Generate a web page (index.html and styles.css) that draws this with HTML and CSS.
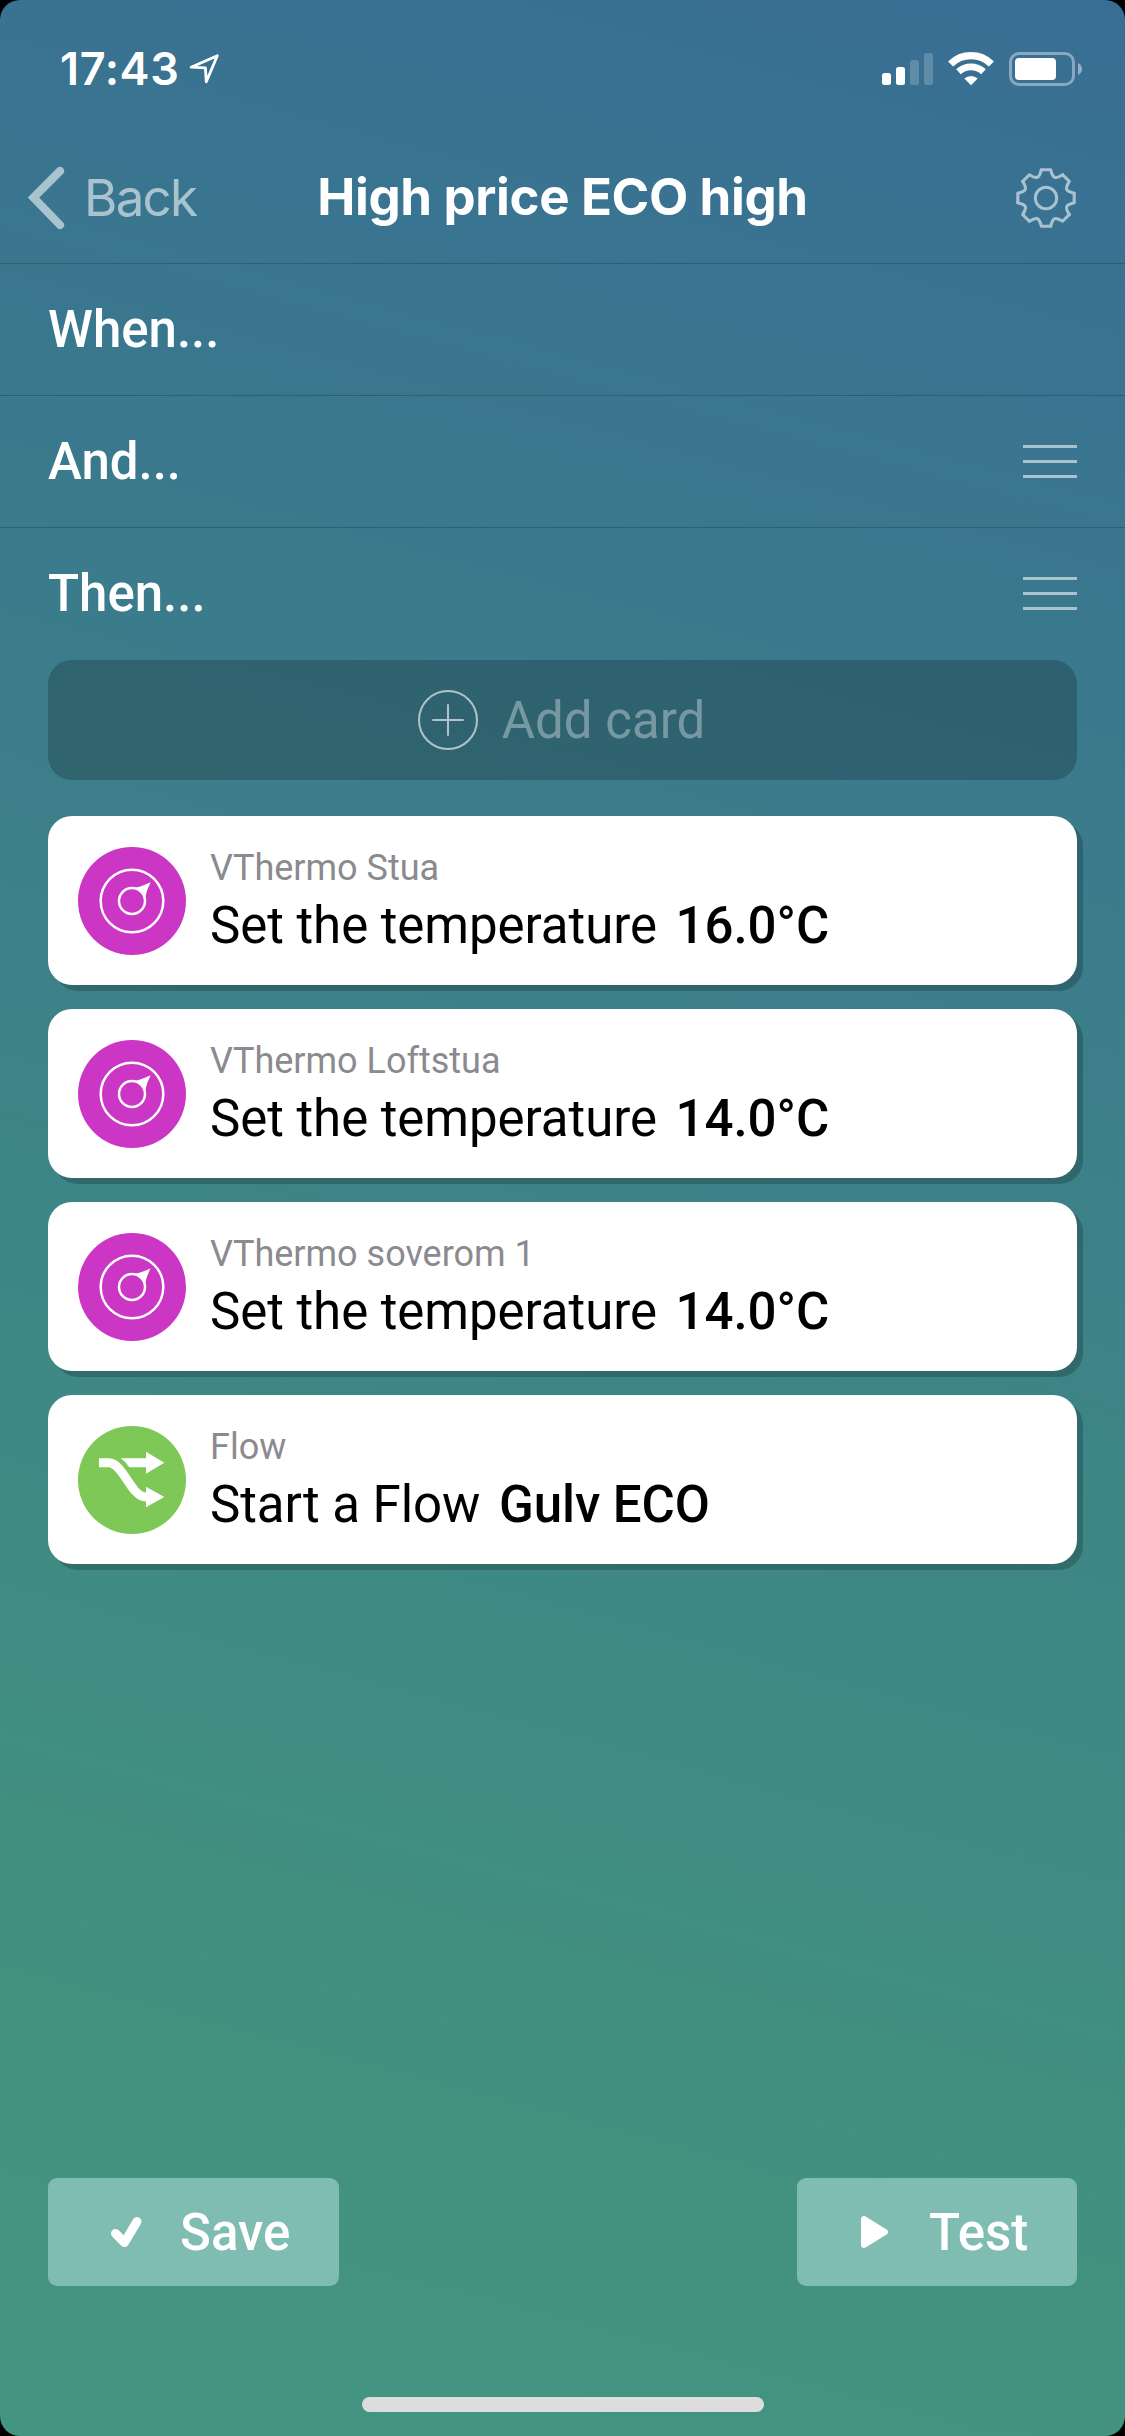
FILE: index.html
```html
<!DOCTYPE html>
<html lang="en">
<head>
<meta charset="utf-8">
<title>High price ECO high</title>
<link rel="stylesheet" href="styles.css">
</head>
<body>
<svg class="defs" width="0" height="0" aria-hidden="true">
  <symbol id="thermo" viewBox="0 0 108 108">
    <g fill="none" stroke="#fff" stroke-width="2.5"><circle cx="54" cy="54" r="31.3"/><circle cx="54" cy="54" r="13"/></g>
    <path d="M57 41Q65 39 72.7 35.3Q68.5 43 67.3 50.5Q64 43 57 41Z" fill="#fff"/>
  </symbol>
  <symbol id="flow" viewBox="0 0 108 108">
    <path d="M21 36.8H31C45 36.8 53 71 68 71" fill="none" stroke="#fff" stroke-width="9"/>
    <path d="M68 25.7L86.3 36.8L68 47.7V41.3H51.3Q47.5 35.5 42.7 32.3H68ZM68 60.7L86.3 71L68 81.3Z" fill="#fff"/>
  </symbol>
  <symbol id="menu" viewBox="0 0 54 33">
    <path d="M0 1.5H54M0 16.5H54M0 31.5H54" stroke="#fff" stroke-width="3"/>
  </symbol>
  <symbol id="gear" viewBox="-30 -30 60 60">
    <path id="tooth" d="M-4.7 -28.2H4.7C6.8 -19.5 8.98 -18.6 16.6 -23.3" fill="none" stroke="#fff" stroke-width="3.1" stroke-linejoin="round" stroke-linecap="round"/>
    <use href="#tooth" transform="rotate(45)"/><use href="#tooth" transform="rotate(90)"/>
    <use href="#tooth" transform="rotate(135)"/><use href="#tooth" transform="rotate(180)"/>
    <use href="#tooth" transform="rotate(225)"/><use href="#tooth" transform="rotate(270)"/>
    <use href="#tooth" transform="rotate(315)"/>
    <circle r="10.7" fill="none" stroke="#fff" stroke-width="3"/>
  </symbol>
</svg>
<div class="screen">
  <div class="status">
    <span class="time">17:43</span>
    <svg class="location" width="32" height="32" viewBox="0 0 32 32"><path d="M3.100 14.2L29.300 2.8L18.300 28.8L17.4 14.9Z" fill="none" stroke="#fff" stroke-width="2.8" stroke-linejoin="round"/></svg>
    <svg class="indicators" width="202" height="36" viewBox="0 0 202 36" fill="#fff">
      <rect x="0" y="22" width="9" height="12" rx="2.5"/><rect x="14" y="16" width="9" height="18" rx="2.5"/>
      <rect x="28" y="9" width="9" height="25" rx="2.5" opacity=".2"/><rect x="42" y="2" width="9" height="32" rx="2.5" opacity=".2"/>
      <g fill="none" stroke="#fff"><path d="M68.6 13A29.2 29.2 0 0 1 109.4 13" stroke-width="7.2"/><path d="M76.5 20.8A18.3 18.3 0 0 1 101.500 20.8" stroke-width="6.8"/></g>
      <path d="M82.300 27.500A10 10 0 0 1 95.700 27.500L89 34.200Z"/>
      <rect x="128.500" y="2.500" width="63" height="31" rx="8.500" fill="none" stroke="#fff" stroke-width="3" opacity=".4"/>
      <rect x="133" y="7" width="41" height="22" rx="4"/>
      <path d="M196 12Q200 14 200 18Q200 22 196 24Z" opacity=".45"/>
    </svg>
  </div>
  <header class="header">
    <a class="back"><svg width="38" height="64" viewBox="0 0 38 64"><path d="M32 5L5.500 31.500L32 59" fill="none" stroke="#fff" stroke-width="8.200" stroke-linecap="round"/></svg><span>Back</span></a>
    <h1 class="title">High price ECO high</h1>
    <svg class="gear" width="60" height="60"><use href="#gear"/></svg>
  </header>
  <section class="row"><h2>When...</h2></section>
  <section class="row"><h2>And...</h2><svg class="menu" width="54" height="33"><use href="#menu"/></svg></section>
  <section class="row last"><h2>Then...</h2><svg class="menu" width="54" height="33"><use href="#menu"/></svg></section>
  <main class="cards">
    <button class="add"><svg width="60" height="60" viewBox="0 0 60 60" fill="none" stroke="#fff" stroke-width="2" stroke-linecap="round"><circle cx="30" cy="30" r="29"/><path d="M30 15V45M15 30H45"/></svg><span>Add card</span></button>
    <article class="card"><svg class="icon purple"><use href="#thermo"/></svg><div class="text"><p class="device">VThermo Stua</p><p class="action">Set the temperature <b>16.0°C</b></p></div></article>
    <article class="card"><svg class="icon purple"><use href="#thermo"/></svg><div class="text"><p class="device">VThermo Loftstua</p><p class="action">Set the temperature <b>14.0°C</b></p></div></article>
    <article class="card"><svg class="icon purple"><use href="#thermo"/></svg><div class="text"><p class="device">VThermo soverom 1</p><p class="action">Set the temperature <b>14.0°C</b></p></div></article>
    <article class="card"><svg class="icon green"><use href="#flow"/></svg><div class="text"><p class="device">Flow</p><p class="action">Start a Flow <b>Gulv ECO</b></p></div></article>
  </main>
  <footer class="footer">
    <button class="btn save"><svg width="32" height="32" viewBox="0 0 32 32"><path d="M5.500 17.500L14.500 26.500L27 5.500" fill="none" stroke="#fff" stroke-width="9" stroke-linecap="round" stroke-linejoin="round"/></svg><span>Save</span></button>
    <button class="btn test"><svg width="27" height="32" viewBox="0 0 27 32"><path d="M3 3V29L24 16Z" fill="#fff" stroke="#fff" stroke-width="6" stroke-linejoin="round"/></svg><span>Test</span></button>
  </footer>
  <div class="home"></div>
</div>
</body>
</html>
```

FILE: styles.css
```css
* { box-sizing: border-box; }
html, body { margin: 0; background: #000; }
h1, h2, p { margin: 0; }
button { border: 0; padding: 0; margin: 0; font: inherit; color: inherit; }
svg { display: block; flex: none; }
.defs { position: absolute; }
.screen {
  width: 1125px;
  height: 2436px;
  display: flex;
  flex-direction: column;
  overflow: hidden;
  border-radius: 20px;
  background: linear-gradient(195deg, #386e94 0%, #3a798d 26%, #42927f 85%, #439480 100%);
  color: #fff;
  font-family: Roboto, sans-serif;
  font-size: 51px;
}
.status {
  height: 132px;
  padding: 0 41px 0 60px;
  display: flex;
  align-items: flex-start;
}
.time {
  margin-top: 41px;
  width: 128px;
  font: 600 45px/55px Inter, sans-serif;
  letter-spacing: .6px;
  white-space: nowrap;
}
.location { margin-top: 53px; }
.indicators { margin: 51px 0 0 auto; }
.header {
  height: 132px;
  padding: 0 28px;
  border-bottom: 1px solid rgba(0, 0, 0, .2);
  display: grid;
  grid-template-columns: 1fr auto 1fr;
  align-items: center;
  font-family: Inter, sans-serif;
}
.back {
  display: flex;
  align-items: center;
  gap: 18px;
  letter-spacing: -1.7px;
  opacity: .57;
}
.title {
  padding-bottom: 2px;
  font-size: 51px;
  font-weight: 700;
  letter-spacing: -.35px;
  line-height: 62px;
  white-space: nowrap;
}
.gear { justify-self: end; margin-right: 21px; opacity: .57; }
.row {
  height: 132px;
  padding: 0 48px;
  border-bottom: 1px solid rgba(0, 0, 0, .2);
  display: flex;
  align-items: center;
  justify-content: space-between;
}
.row h2 { font-size: 51px; font-weight: 500; line-height: 60px; }
.row.last { border-bottom-color: transparent; }
.menu { opacity: .57; }
.cards {
  padding: 0 48px;
  display: flex;
  flex-direction: column;
  gap: 24px;
}
.add {
  height: 120px;
  margin-bottom: 12px;
  padding-right: 2px;
  border-radius: 24px;
  background: rgba(0, 0, 0, .2);
  display: flex;
  align-items: center;
  justify-content: center;
  gap: 24px;
}
.add svg { opacity: .62; }
.add span { padding-top: 2px; color: rgba(255, 255, 255, .35); line-height: 60px; }
.card {
  height: 169px;
  padding: 0 30px;
  border-radius: 24px;
  background: #fff;
  box-shadow: 6px 6px 0 rgba(0, 0, 0, .2);
  display: flex;
  align-items: center;
  gap: 24px;
}
.icon { width: 108px; height: 108px; border-radius: 50%; }
.purple { background: #cb36c5; }
.green { background: #7dc857; }
.text { padding-top: 4px; white-space: nowrap; }
.device { font-size: 36px; line-height: 46px; color: #8a8a8f; }
.action { line-height: 70px; letter-spacing: -.05px; color: #000; }
.action b { margin-left: 6px; font-weight: 500; }
.footer {
  margin-top: auto;
  padding: 0 48px;
  display: flex;
  justify-content: space-between;
}
.btn {
  height: 108px;
  border-radius: 9px;
  background: #7fbdb3;
  display: flex;
  align-items: center;
  font-weight: 500;
}
.save { width: 291px; padding-left: 62px; gap: 38px; }
.test { width: 280px; padding-left: 64px; gap: 41px; }
.home {
  width: 402px;
  height: 15px;
  margin: 111px auto 24px;
  border-radius: 8px;
  background: #ddd;
}
```
